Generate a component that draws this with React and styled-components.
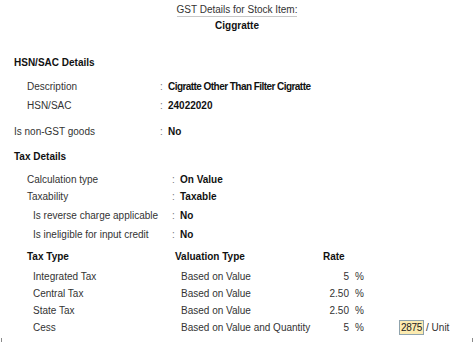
import React from "react";
import styled, { createGlobalStyle } from "styled-components";

const GlobalStyle = createGlobalStyle`
  html, body {
    margin: 0;
    padding: 0;
    background: #ffffff;
  }
  body {
    font-family: "Liberation Sans", Arial, sans-serif;
    font-size: 10px;
    color: #2b2b2b;
  }
`;

const Page = styled.div`
  width: 474px;
  height: 342px;
  overflow: hidden;
  display: flex;
  flex-direction: column;
`;

const Header = styled.div`
  display: flex;
  flex-direction: column;
  align-items: center;
  padding-top: 3px;
`;

const Title = styled.span`
  line-height: 13px;
  color: #333;
  border-bottom: 1px solid #c8c8c8;
`;

const ItemName = styled.div`
  height: 17px;
  line-height: 17px;
  font-weight: bold;
  color: #111;
`;

const Row = styled.div`
  display: flex;
  height: 17px;
  line-height: 17px;
  margin-top: ${(p) => p.$mt || 0}px;
  padding-left: ${(p) => p.$indent || 0}px;
`;

const Heading = styled.div`
  font-weight: bold;
  color: #111;
`;

const Label = styled.div`
  width: ${(p) => p.$w}px;
  color: #333;
  white-space: nowrap;
`;

const Colon = styled.div`
  width: 8px;
  color: #777;
`;

const Value = styled.div`
  font-weight: bold;
  color: #111;
  white-space: nowrap;
  letter-spacing: ${(p) => (p.$tight ? "-0.55px" : "0")};
`;

const TableRow = styled.div`
  display: grid;
  grid-template-columns: 148px 148px 26px 50px auto;
  height: 17px;
  line-height: 17px;
  margin-top: ${(p) => p.$mt || 0}px;
  padding-left: 27px;
  font-weight: ${(p) => (p.$head ? "bold" : "normal")};
  color: ${(p) => (p.$head ? "#111" : "#333")};
`;

const Cell = styled.div`
  white-space: nowrap;
  padding-left: ${(p) => (p.$head ? 0 : 6)}px;
`;

const RateCell = styled.div`
  white-space: nowrap;
  text-align: right;
`;

const Extra = styled.div`
  display: flex;
  align-items: center;
  gap: 2px;
  white-space: nowrap;
`;

const InputBox = styled.span`
  display: inline-block;
  height: 13px;
  line-height: 13px;
  padding: 0 1px;
  background: #fcebb0;
  border: 1px solid #8fa3ad;
  color: #222;
  letter-spacing: -0.3px;
`;

const Footer = styled.div`
  height: 4px;
  margin: 2px 1px 0;
  border-left: 1px solid #8a8a8a;
  border-right: 1px solid #8a8a8a;
`;

const taxRows = [
  { type: "Integrated Tax", valuation: "Based on Value", rate: "5", mt: 3 },
  { type: "Central Tax", valuation: "Based on Value", rate: "2.50" },
  { type: "State Tax", valuation: "Based on Value", rate: "2.50" },
  { type: "Cess", valuation: "Based on Value and Quantity", rate: "5", perUnit: "2875" },
];

function Field({ indent, colonAt, label, value, mt, tight }) {
  return (
    <Row $indent={indent} $mt={mt}>
      <Label $w={colonAt - indent}>{label}</Label>
      <Colon>:</Colon>
      <Value $tight={tight}>{value}</Value>
    </Row>
  );
}

export default function App() {
  return (
    <Page>
      <GlobalStyle />
      <Header>
        <Title>GST Details for Stock Item:</Title>
        <ItemName>Ciggratte</ItemName>
      </Header>

      <Row $indent={14} $mt={20}>
        <Heading>HSN/SAC Details</Heading>
      </Row>
      <Field indent={27} colonAt={160} mt={7} label="Description" value="Cigratte Other Than Filter Cigratte" tight />
      <Field indent={27} colonAt={160} mt={2} label="HSN/SAC" value="24022020" />
      <Field indent={14} colonAt={160} mt={9} label="Is non-GST goods" value="No" />

      <Row $indent={14} $mt={8}>
        <Heading>Tax Details</Heading>
      </Row>
      <Field indent={27} colonAt={172} mt={6} label="Calculation type" value="On Value" />
      <Field indent={27} colonAt={172} label="Taxability" value="Taxable" />
      <Field indent={33} colonAt={172} mt={2} label="Is reverse charge applicable" value="No" />
      <Field indent={33} colonAt={172} mt={2} label="Is ineligible for input credit" value="No" />

      <TableRow $head $mt={5}>
        <Cell $head>Tax Type</Cell>
        <Cell $head>Valuation Type</Cell>
        <Cell $head>Rate</Cell>
        <div />
        <div />
      </TableRow>
      {taxRows.map((r) => (
        <TableRow key={r.type} $mt={r.mt}>
          <Cell>{r.type}</Cell>
          <Cell>{r.valuation}</Cell>
          <RateCell>{r.rate}</RateCell>
          <Cell>%</Cell>
          <Extra>
            {r.perUnit && (
              <>
                <InputBox>{r.perUnit}</InputBox>
                <span>/ Unit</span>
              </>
            )}
          </Extra>
        </TableRow>
      ))}
      <Footer />
    </Page>
  );
}
